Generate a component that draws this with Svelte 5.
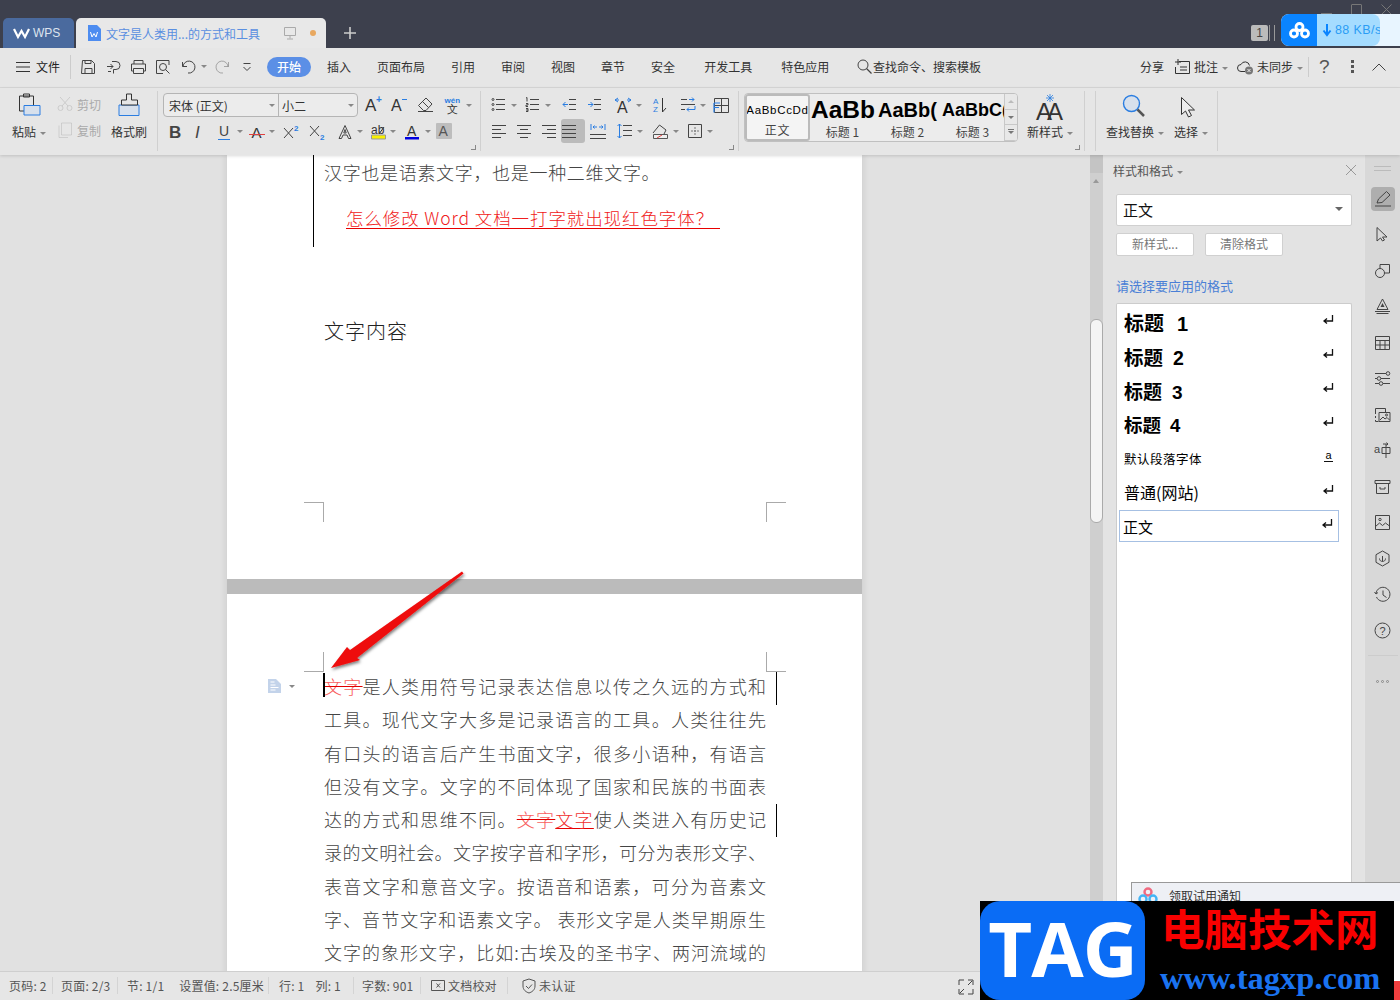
<script>
  const line = 'fill="none" stroke="currentColor" stroke-width="1"';
  const blue = '#2a7de1';
  const icons = {
    save: `<g ${line}><path d="M2.500 1.500h9l3 3v10h-13zM5 14.500v-5h7v5M5 1.500v3h6v-3"/></g>`,
    share: `<g ${line}><path d="M6 2.500h4a4 4 0 0 1 0 8H7.500v4M1 7.500h6M4.500 5l2.500 2.500L4.500 10M2 12.500h3"/></g>`,
    print: `<g ${line}><path d="M4 5V1.500h9V5M3.500 12H1.500V5h14v7h-2M3.500 9.500h10v5h-10z"/></g>`,
    preview: `<g ${line}><path d="M14 6V1.500H1.500v13H8"/><circle cx="8" cy="8" r="3.500"/><path d="M10.500 10.500l4 4"/></g>`,
    undo: `<g ${line}><path d="M1.500 3v4.500H6M2 7.500A6 6 0 1 1 7 14"/></g>`,
    redo: `<g ${line} opacity=".4"><path d="M14.500 3v4.500H10M14 7.500A6 6 0 1 0 9 14"/></g>`,
    more: `<g ${line}><path d="M1.500 1.500h7M1.500 5l3.500 3.500L8.500 5"/></g>`,
    note: `<g ${line}><path d="M5 2.500h10.500v12H1.500V8M6 8h7M6 11h7M4 0v6M1 3h6"/></g>`,
    cloud: `<g ${line}><path d="M8 12.500H4A3.500 3.500 0 0 1 4 5.500a4.500 4.500 0 0 1 8.500 1"/></g><circle cx="12" cy="11.500" r="4" fill="#777"/><path d="M10.500 10l3 3m0-3l-3 3" stroke="#eee"/>`,
    paste: `<path d="M2.500 3h14v15h-14zM6.500 1h6v3h-6z" fill="#e6e6e6" stroke="#333"/><path d="M7 12.500h16v9.500h-16z" fill="#d7e0ec" stroke="${blue}"/>`,
    cut: `<g ${line} opacity=".45"><circle cx="3.500" cy="12" r="2.500"/><circle cx="12.500" cy="12" r="2.500"/><path d="M5 10L13 1M11 10L3 1"/></g>`,
    copy: `<g ${line} opacity=".4"><path d="M4.500 1h10v12h-10zM2 3.500v12h9"/></g>`,
    brush: `<path d="M1 12h20v10.500H1z" fill="#d7e0ec" stroke="${blue}"/><path d="M8.500 1h5v6h6v5h-16V7h5z" fill="#e6e6e6" stroke="#333"/>`,
    aplus: `<text x="0" y="15" font-size="17" fill="#333">A</text><text x="11" y="7" font-size="10" font-weight="700" fill="${blue}">+</text>`,
    aminus: `<text x="0" y="15" font-size="16" fill="#333">A</text><path d="M11 3.500h5" stroke="${blue}"/>`,
    eraser: `<g ${line}><path d="M1.500 9.500l7.500-7.500 6 6-6 6.500H6.500zM5.500 5.500l6 6M1 15.500h15"/></g>`,
    wen: `<text x="0.500" y="6.500" font-size="8" fill="${blue}" font-weight="700">wén</text><text x="3" y="16.500" font-size="11" fill="#333">文</text>`,
    bold: `<text x="1" y="14" font-size="17" font-weight="700" fill="#444">B</text>`,
    italic: `<text x="3" y="14" font-size="17" font-style="italic" fill="#444" font-family="Liberation Serif">I</text>`,
    under: `<text x="2" y="12" font-size="14" fill="#444">U</text><path d="M1 15.500h12" stroke="${blue}"/>`,
    strike: `<text x="2.500" y="14" font-size="15" fill="#333">A</text><path d="M0 10.500h16" stroke="#e04040"/>`,
    sup: `<path d="M1 4l9 10m0-10l-9 10" ${line}/><text x="11" y="7" font-size="8" font-weight="700" fill="${blue}">2</text>`,
    sub: `<path d="M1 2l9 10m0-10l-9 10" ${line}/><text x="11" y="16" font-size="8" font-weight="700" fill="${blue}">2</text>`,
    aout: `<path d="M8 1.500l6 13h-2.500L10 11H6l-1.500 3.500H2z" ${line}/><path d="M8 5.500L6.800 9h2.400z" ${line}/>`,
    high: `<text x="1" y="10" font-size="12" fill="#333">ab</text><path d="M1.500 11h14v4h-14z" fill="#f8f000" stroke="#999"/><path d="M9 10l5-7" stroke="#333"/>`,
    acolor: `<text x="2" y="12" font-size="14" fill="#333">A</text><path d="M0 13h14v2.500H0z" fill="#0000e0"/>`,
    ashade: `<rect x="-2" y="-1" width="16" height="16" fill="#bdbdbd" rx="1"/><text x="0.500" y="12" font-size="14" fill="#555">A</text>`,
    bul: `<g ${line}><path d="M5 2.500h9M5 7.500h9M5 12.500h9"/><circle cx="2" cy="2.500" r="1"/><circle cx="2" cy="7.500" r="1"/><circle cx="2" cy="12.500" r="1"/></g>`,
    num: `<g ${line}><path d="M5 2.500h9M5 7.500h9M5 12.500h9M1 1l1-.5v4M1 6.500h2v1.500H1v1.500h2M1 11.500h2v3H1M1 13h2"/></g>`,
    outd: `<g ${line}><path d="M7 2.500h7M7 7.500h7M7 12.500h7"/></g><path d="M6 7.500H1M3.500 5L1 7.500 3.500 10" fill="none" stroke="${blue}"/>`,
    ind: `<g ${line}><path d="M7 2.500h7M7 7.500h7M7 12.500h7"/></g><path d="M1 7.500h5M3.500 5L6 7.500 3.500 10" fill="none" stroke="${blue}"/>`,
    aarrow: `<text x="3" y="17" font-size="16" fill="#333">A</text><path d="M1 4l3-2M1 4l3 2M1 4h4M13 4h4M17 4l-3-2M17 4l-3 2" fill="none" stroke="${blue}"/>`,
    sort: `<text x="0" y="7" font-size="8" fill="${blue}">A</text><text x="0" y="15" font-size="8" fill="${blue}">Z</text><path d="M9.500 1v14M9.500 15L13 11" fill="none" stroke="#333"/>`,
    swap: `<g ${line}><path d="M1 2.500h6M1 7.500h14M1 12.500h4"/></g><path d="M9 2.500h5M12 .5l2 2-2 2M15 9v3.500H7M9 10.500l-2 2 2 2" fill="none" stroke="${blue}"/>`,
    grid: `<g ${line}><path d="M1.500 1.500h14v14h-14zM8.500 1.500v14M1.500 8.500h14"/></g><path d="M1 6h6M1 6v9.500M1 10.500h5" fill="none" stroke="${blue}" stroke-width="1.200"/>`,
    al: `<g ${line}><path d="M1 2.500h14M1 6.500h9M1 10.500h14M1 14.500h9"/></g>`,
    ac: `<g ${line}><path d="M1 2.500h14M4 6.500h8M1 10.500h14M4 14.500h8"/></g>`,
    ar: `<g ${line}><path d="M1 2.500h14M6 6.500h9M1 10.500h14M6 14.500h9"/></g>`,
    aj: `<g ${line}><path d="M0 2.500h14M0 6.500h14M0 10.500h14M0 14.500h14"/></g>`,
    dist: `<path d="M0 11.500h16M0 15.500h16" ${line}/><path d="M1 1v6M15 1v6M3 4h4M3 4l1.500-1.500M3 4l1.500 1.500M13 4H9M13 4l-1.500-1.500M13 4l-1.500 1.500" fill="none" stroke="${blue}"/>`,
    space: `<path d="M6 2.500h9M6 7.500h9M6 12.500h9" ${line}/><path d="M2.500 1v14M.5 3l2-2 2 2M.5 13l2 2 2-2" fill="none" stroke="${blue}"/>`,
    shade: `<path d="M1 10l6.500-8L14 7l-2 4" ${line}/><path d="M1.500 11.500h14v4h-14z" fill="#eee" stroke="#555"/><path d="M5 15l5-3" stroke="#e04040"/>`,
    border: `<path d="M1.500 1.500h13v13h-13z" ${line}/><path d="M8 4v8M4 8h8" stroke="#777" stroke-dasharray="2 1"/>`,
    newstyle: `<text x="1" y="27" font-size="24" fill="#333" letter-spacing="-5">AA</text><path d="M15 1v8M11 5h8M12 2l6 6M18 2l-6 6" stroke="${blue}" stroke-width=".8"/>`,
    find: `<circle cx="9.500" cy="9.500" r="8" fill="#d7e0ec" stroke="${blue}" stroke-width="1.400"/><path d="M15.500 15.500l6.500 6.500" stroke="#555" stroke-width="2.500"/>`,
    select: `<path d="M1.500 1.500v17l4-3.500 3 6 3-1.500-3-5.500h6z" fill="#eee" stroke="#333"/>`,
    pen: `<path d="M1 16h16M3 13l1.500-4L12.500 1.500l3.500 3.500-8 7.500z" ${line}/>`,
    cursor: `<path d="M3 1.500v13.500l3.500-3 2 3 2-1-2-3h4.500z" ${line}/>`,
    shapes: `<g ${line}><circle cx="6" cy="11" r="4.500"/><path d="M6 6.500V2.500h9.500V11H10.500"/></g>`,
    textfx: `<g ${line}><path d="M8.500 1l5.500 10.500H3zM1 13.500h15M2.500 15.500h12"/></g><path d="M8.500 5L6.500 9h4z" fill="#444"/>`,
    table: `<g ${line}><path d="M1.500 2.500h14v13h-14zM1.500 6.500h14M1.500 11h14M6 6.500v9M11 6.500v9"/></g>`,
    tune: `<g ${line}><path d="M1 3.500h11M1 8.500h2M7 8.500h9M1 13.500h4M9 13.500h7"/><circle cx="14" cy="3.500" r="1.800"/><circle cx="5" cy="8.500" r="1.800"/><circle cx="7" cy="13.500" r="1.800"/></g>`,
    gallery: `<g ${line}><path d="M1.500 8V2.500h10V6M1.500 10v2M1.500 14v1.500h3M5 6.500h11v9H5zM6 14l3-3 2 2 2-1.500 2.500 2.500"/><circle cx="12.500" cy="9" r="1"/></g>`,
    trans: `<text x="0" y="11" font-size="11" fill="#444">a</text><g ${line}><path d="M8 5.500h8v6H8zM12 2v14M9 2h5M12.500 .5l1.500 1.500-1.500 1.500"/></g>`,
    box: `<g ${line}><path d="M1 2.500h15v3H1zM2.500 5.500v10h12v-10M6 9v2h5V9"/></g>`,
    image: `<g ${line}><path d="M1.500 1.500h14v14h-14zM1.500 12.500l4-3.500 3 2.500 3-2.500 4 3"/><circle cx="6" cy="5.500" r="1.200"/></g>`,
    shield: `<g ${line}><path d="M8.500 1l6.500 3.700v7.600L8.500 16 2 12.300V4.700z"/><path d="M5.500 8.500c0 3 3 3 3 3s3 0 3-3M8.500 11.500V6"/></g>`,
    history: `<g ${line}><path d="M2.500 11A7 7 0 1 0 2 7.500M.5 6l1.500 2 2-1.500M9 4.500V9l3.500 2.500"/></g>`,
    help: `<circle cx="8.500" cy="8.500" r="7.500" ${line}/><text x="5.500" y="12.500" font-size="11" fill="#444">?</text>`,
    docside: `<path d="M0 0h8l5 5v9H0z" fill="#c3d3ea"/><path d="M2.500 3h4M2.500 6h5M2.500 8.500h8M2.500 11h5" fill="none" stroke="#fff"/>`,
    proof: `<g ${line}><path d="M11 2.500H1.500v10H11M6 2.500h8.500v10H6"/><path d="M6.500 5.500l3.500 4m0-4l-3.500 4"/></g>`,
    verify: `<g ${line}><path d="M8 1l6 2v5c0 4-3 6-6 7-3-1-6-3-6-7V3zM5 8l2.500 2.500L11 6.500"/></g>`,
    full: `<g ${line}><path d="M1 6V1h5M10 1h5v5M15 10v5h-5M6 15H1v-5M2 14l4-4M14 2l-4 4"/></g>`
  };

  const fontRow1 = [{ n: 'aplus', w: 26, s: 18 }, { n: 'aminus', w: 26, s: 18 }, { n: 'eraser', w: 27, s: 18 }, { n: 'wen', w: 23, s: 18, c: 1 }];
  const fontRow2 = [
    { n: 'bold', w: 24 }, { n: 'italic', w: 25 }, { n: 'under', w: 32, c: 1 }, { n: 'strike', w: 34, c: 1 },
    { n: 'sup', w: 26 }, { n: 'sub', w: 28 }, { n: 'aout', w: 33, c: 1 }, { n: 'high', w: 35, c: 1 },
    { n: 'acolor', w: 33, c: 1 }, { n: 'ashade', w: 16 }
  ];
  const paraRow1 = [
    { n: 'bul', w: 34, c: 1 }, { n: 'num', w: 37, c: 1 }, { n: 'outd', w: 25 }, { n: 'ind', w: 27 },
    { n: 'aarrow', w: 39, s: 18, c: 1 }, { n: 'sort', w: 27 }, { n: 'swap', w: 33, c: 1 }, { n: 'grid', w: 17, s: 17 }
  ];
  const paraRow2 = [
    { n: 'al', w: 25 }, { n: 'ac', w: 25 }, { n: 'ar', w: 21 }, { n: 'aj', w: 28, on: 1 }, { n: 'dist', w: 27, s: 17 },
    { n: 'space', w: 35, c: 1 }, { n: 'shade', w: 35, s: 17, c: 1 }, { n: 'border', w: 30, c: 1 }
  ];
  const quick = [{ n: 'save', w: 26 }, { n: 'share', w: 24 }, { n: 'print', w: 25 }, { n: 'preview', w: 26 }, { n: 'undo', w: 33, c: 1 }, { n: 'redo', w: 28 }, { n: 'more', w: 10, s: 10 }];
  const tabs = ['插入', '页面布局', '引用', '审阅', '视图', '章节', '安全', '开发工具', '特色应用'];
  const gallery = [
    { a: 'AaBbCcDd', l: '正文', cls: 'g0' },
    { a: 'AaBb', l: '标题 1', cls: 'g1' },
    { a: 'AaBb(', l: '标题 2', cls: 'g2' },
    { a: 'AaBbC(', l: '标题 3', cls: 'g3' }
  ];
  const styles = [
    { t: '标题', num: '1', cls: 'h1' }, { t: '标题', num: '2', cls: 'h2' }, { t: '标题', num: '3', cls: 'h3' },
    { t: '标题', num: '4', cls: 'h4' }, { t: '默认段落字体', cls: 'def', a: true }, { t: '普通(网站)', cls: 'web' }, { t: '正文', cls: 'web cur' }
  ];
  const rail = ['cursor', 'shapes', 'textfx', 'table', 'tune', 'gallery', 'trans', 'box', 'image', 'shield', 'history', 'help'];
  const body1 = ['工具。现代文字大多是记录语言的工具。人类往往先', '有口头的语言后产生书面文字，很多小语种，有语言', '但没有文字。文字的不同体现了国家和民族的书面表'];
  const body2 = ['录的文明社会。文字按字音和字形，可分为表形文字、', '表音文字和意音文字。按语音和语素，可分为音素文', '字、音节文字和语素文字。 表形文字是人类早期原生', '文字的象形文字，比如:古埃及的圣书字、两河流域的'];
  const status = [['页码: 2'], ['页面: 2/3'], ['节: 1/1', '设置值: 2.5厘米'], ['行: 1', '列: 1'], ['字数: 901']];
</script>

{#snippet icon(n, s = 16)}
  <svg class="ic" width={s} height={s} viewBox="0 0 {s} {s}">{@html icons[n]}</svg>
{/snippet}

{#snippet tools(list)}
  {#each list as t}
    <span class="slot" class:on={t.on} style="width:{t.w}px">{@render icon(t.n, t.s ?? 16)}{#if t.c}<i class="caret"></i>{/if}</span>
  {/each}
{/snippet}

<div class="app">
  <header class="titlebar">
    <div class="wpstab">
      <svg width="17" height="12" viewBox="0 0 17 12"><path d="M1 2l4 8 3.500-6 3.500 6 4-8" fill="none" stroke="#fff" stroke-width="2.200"/></svg>
      <span>WPS</span>
    </div>
    <div class="doctab">
      <svg width="14" height="16" viewBox="0 0 14 16"><path d="M1 0h9l4 4v12H1z" fill="#4d8cf0"/><path d="M3.500 7l1.500 5 2-3.500 2 3.500 1.500-5" fill="none" stroke="#fff"/></svg>
      <span class="doctitle">文字是人类用...的方式和工具</span>
      <svg class="screen" width="12" height="13" viewBox="0 0 12 13"><path d="M.5.5h11v8H.5zM6 8.500v3M3 12h6" fill="none" stroke="#aaa"/></svg>
      <i class="dot"></i>
    </div>
    <svg class="plus" width="12" height="12" viewBox="0 0 12 12"><path d="M6 0v12M0 6h12" stroke="#ccc" stroke-width="1.600"/></svg>
    <div class="winctl">
      <i class="min"></i><i class="max"></i>
      <svg width="11" height="11" viewBox="0 0 11 11"><path d="M.5.5l10 10m0-10l-10 10" stroke="#777"/></svg>
    </div>
    <div class="badge"><b>1</b><i></i></div>
    <div class="netdisk">
      <div class="netlogo">
        <svg width="21" height="17" viewBox="0 0 21 17"><g fill="none" stroke="#fff" stroke-width="2.800"><circle cx="10.500" cy="5" r="3.500"/><circle cx="5" cy="11.500" r="3.500"/><circle cx="16" cy="11.500" r="3.500"/></g></svg>
      </div>
      <div class="netspeed">
        <svg width="8" height="12" viewBox="0 0 8 12"><path d="M4 0v10M.5 6.500L4 11l3.500-4.500" fill="none" stroke="#0a84ff" stroke-width="2"/></svg>
        <span>88 KB/s</span>
      </div>
    </div>
  </header>

  <nav class="menubar">
    <svg class="burger" width="14" height="10" viewBox="0 0 14 10"><path d="M0 .5h14M0 5h14M0 9.500h14" stroke="#333"/></svg>
    <span class="file">文件</span>
    <i class="vsep"></i>
    <div class="quick">{@render tools(quick)}</div>
    <span class="pill">开始</span>
    <div class="tabs">
      {#each tabs as t}<span>{t}</span>{/each}
    </div>
    <div class="cmd">
      <svg width="15" height="15" viewBox="0 0 15 15"><circle cx="6" cy="6" r="5" fill="none" stroke="#444"/><path d="M9.500 9.500l5 5" stroke="#444" stroke-width="1.300"/></svg>
      <span>查找命令、搜索模板</span>
    </div>
    <div class="menuright">
      <span class="share">分享</span>
      {@render icon('note')}<span class="mr">批注<i class="caret"></i></span>
      {@render icon('cloud')}<span class="mr end">未同步<i class="caret"></i></span>
      <i class="vsep short"></i>
      <span class="q">?</span>
      <svg class="dots" width="3" height="13" viewBox="0 0 3 13"><path d="M0 0h3v3H0zM0 5h3v3H0zM0 10h3v3H0z" fill="#555"/></svg>
      <svg class="up" width="14" height="8" viewBox="0 0 14 8"><path d="M.5 7.500L7 1l6.500 6.500" fill="none" stroke="#444"/></svg>
    </div>
  </nav>

  <section class="ribbon">
    <div class="grp clip">
      <div class="pastecol">
        {@render icon('paste', 24)}
        <span>粘贴<i class="caret"></i></span>
      </div>
      <div class="clipcol">
        <span class="dim">{@render icon('cut')}<em>剪切</em></span>
        <span class="dim">{@render icon('copy')}<em>复制</em></span>
      </div>
      <div class="brushcol">
        {@render icon('brush', 22)}
        <span>格式刷</span>
      </div>
    </div>
    <i class="rsep"></i>
    <div class="grp font">
      <div class="row r1">
        <div class="fontbox"><span class="fname">宋体 (正文)<i class="caret"></i></span><span class="fsize">小二<i class="caret"></i></span></div>
        {@render tools(fontRow1)}
      </div>
      <div class="row r2">{@render tools(fontRow2)}</div>
      <i class="launch"></i>
    </div>
    <i class="rsep"></i>
    <div class="grp para">
      <div class="row">{@render tools(paraRow1)}</div>
      <div class="row p2">{@render tools(paraRow2)}</div>
      <i class="launch"></i>
    </div>
    <i class="rsep"></i>
    <div class="grp stylegrp">
      <div class="gallery">
        {#each gallery as g, i}
          <div class="gitem {g.cls}" class:first={i === 0}>
            <span class="sample">{g.a}</span>
            <span class="glabel">{g.l}</span>
          </div>
        {/each}
        <div class="gscroll"><i class="sup"></i><i class="sdown"></i><i class="sdown bar"></i></div>
      </div>
      <div class="newstyle">
        {@render icon('newstyle', 30)}
        <span>新样式<i class="caret"></i></span>
      </div>
      <i class="launch"></i>
    </div>
    <i class="rsep"></i>
    <i class="rsep second"></i>
    <div class="grp editgrp">
      <div class="bigbtn find">{@render icon('find', 26)}<span>查找替换<i class="caret"></i></span></div>
      <div class="bigbtn sel">{@render icon('select', 22)}<span>选择<i class="caret"></i></span></div>
    </div>
    <i class="rsep"></i>
  </section>

  <main class="workspace">
    <div class="docarea">
      <div class="sheet">
        <article class="page one">
          <i class="revbar"></i>
          <p class="first">汉字也是语素文字，也是一种二维文字。</p>
          <p class="redline">怎么修改 Word 文档一打字就出现红色字体？</p>
          <p class="heading">文字内容</p>
          <i class="crop c1"></i><i class="crop c2"></i>
        </article>
        <article class="page two">
          <i class="crop c3"></i><i class="crop c4"></i>
          <span class="sideicon">{@render icon('docside', 14)}<i class="caret"></i></span>
          <i class="cursor"></i>
          <i class="change l1"></i><i class="change l5"></i>
          <div class="bodytext">
            <p><s>文字</s>是人类用符号记录表达信息以传之久远的方式和</p>
            {#each body1 as l}<p>{l}</p>{/each}
            <p>达的方式和思维不同。<s>文字</s><u>文字</u>使人类进入有历史记</p>
            {#each body2 as l}<p>{l}</p>{/each}
          </div>
        </article>
      </div>
    </div>
    <div class="vscroll">
      <i class="splitter"></i>
      <i class="arrowup"></i>
      <i class="thumb"></i>
    </div>
    <aside class="panel">
      <div class="phead"><span>样式和格式<i class="caret"></i></span>
        <svg width="10" height="10" viewBox="0 0 10 10"><path d="M0 0l10 10m0-10L0 10" stroke="#999"/></svg>
      </div>
      <div class="combo"><span>正文</span><i class="caret big"></i></div>
      <div class="pbtns"><button>新样式...</button><button>清除格式</button></div>
      <div class="hint">请选择要应用的格式</div>
      <ul class="stylelist">
        {#each styles as s}
          <li class={s.cls}>
            <span>{s.t}{#if s.num}<b class="n">{s.num}</b>{/if}</span>
            {#if s.a}
              <em class="amark">a</em>
            {:else}
              <svg class="ret" width="11" height="10" viewBox="0 0 11 10"><path d="M9.500 0v6H2M4 3.500L1 6l3 2.500" fill="none" stroke="#111" stroke-width="1.300"/></svg>
            {/if}
          </li>
        {/each}
      </ul>
    </aside>
    <div class="rail">
      <i class="grip"></i>
      <span class="railbtn active">{@render icon('pen', 18)}</span>
      {#each rail as r}
        <span class="railbtn">{@render icon(r, 17)}</span>
      {/each}
      <i class="railsep"></i>
      <span class="raildots"><i></i><i></i><i></i></span>
    </div>
    <div class="notice">
      <svg width="20" height="18" viewBox="0 0 20 18"><g fill="none" stroke-width="2.400"><circle cx="10" cy="5" r="3.500" stroke="#f06a80"/><circle cx="5" cy="12" r="3.500" stroke="#43b4f5"/><circle cx="15" cy="12" r="3.500" stroke="#43b4f5"/></g></svg>
      <span>领取试用通知</span>
    </div>
  </main>

  <footer class="statusbar">
    {#each status as group, i}
      <div class="sgroup s{i}">{#each group as s}<span>{s}</span>{/each}</div>
    {/each}
    <div class="sgroup withicon">{@render icon('proof')}<span>文档校对</span></div>
    <div class="sgroup withicon last">{@render icon('verify')}<span>未认证</span></div>
    <span class="fullbtn">{@render icon('full')}</span>
  </footer>

  <svg class="arrow" width="150" height="110" viewBox="0 0 150 110">
    <defs><filter id="sh" x="-20%" y="-20%" width="150%" height="150%"><feDropShadow dx="1" dy="2" stdDeviation="1.500" flood-color="#000" flood-opacity=".5"/></filter></defs>
    <path d="M133 1.500L134.500 3.500 28 88l3 2L2 98 18 77l3 3z" fill="#ee0a0a" filter="url(#sh)"/>
  </svg>

  <div class="watermark">
    <div class="tag">TAG</div>
    <div class="wmtext">
      <span class="cn">电脑技术网</span>
      <span class="url">www.tagxp.com</span>
    </div>
  </div>
  <div class="wmedge"></div>
</div>

<style>
  :global(body) {
    margin: 0;
  }

  .app {
    position: relative;
    width: 1400px;
    height: 1000px;
    overflow: hidden;
    display: flex;
    flex-direction: column;
    background: #e1e1e1;
    color: #333;
    font-family: "Noto Sans CJK SC", "Liberation Sans", sans-serif;
    font-size: 12px;
  }

  i, em {
    font-style: normal;
  }

  svg {
    display: block;
    flex: none;
    overflow: visible;
  }

  svg :global(text) {
    font-family: "Liberation Sans", sans-serif;
  }

  .caret {
    display: inline-block;
    width: 0;
    height: 0;
    border: 3px solid transparent;
    border-top: 3px solid #888;
    border-bottom: 0;
    margin-left: 4px;
    vertical-align: middle;
    flex: none;
  }

  .titlebar {
    height: 48px;
    background: #3d404d;
    position: relative;
    display: flex;
    align-items: flex-end;
    padding-left: 3px;
    flex: none;
  }

  .wpstab {
    width: 71px;
    height: 30px;
    background: #4a6a9e;
    border-radius: 5px 5px 0 0;
    display: flex;
    align-items: center;
    gap: 3px;
    padding-left: 10px;
    box-sizing: border-box;
    color: #dde4ef;
    font-family: "Liberation Sans", sans-serif;
    font-size: 12px;
  }

  .doctab {
    width: 250px;
    height: 30px;
    margin-left: 2px;
    background: #e8e8e8;
    border-radius: 5px 5px 0 0;
    display: flex;
    align-items: center;
    padding-left: 11px;
    box-sizing: border-box;
  }

  .doctitle {
    margin-left: 5px;
    width: 178px;
    color: #5a8fe0;
    white-space: nowrap;
  }

  .dot {
    width: 6px;
    height: 6px;
    border-radius: 50%;
    background: #e8a860;
    margin-left: 14px;
  }

  .plus {
    margin: 0 0 9px 18px;
  }

  .winctl {
    position: absolute;
    top: 4px;
    right: 8px;
    display: flex;
    align-items: center;
    gap: 19px;
  }

  .min {
    width: 11px;
    height: 1px;
    background: #777;
    margin-top: 7px;
  }

  .max {
    width: 9px;
    height: 9px;
    border: 1px solid #777;
    border-radius: 1px;
  }

  .badge {
    position: absolute;
    left: 1251px;
    top: 25px;
    display: flex;
    align-items: center;
  }

  .badge b {
    width: 17px;
    height: 16px;
    background: #bbb;
    color: #444;
    border-radius: 2px;
    font: 400 12px/16px "Liberation Sans", sans-serif;
    text-align: center;
  }

  .badge i {
    width: 4px;
    height: 16px;
    border-left: 1px solid #999;
    border-right: 1px solid #999;
    margin-left: 1px;
  }

  .netdisk {
    position: absolute;
    left: 1281px;
    top: 14px;
    width: 119px;
    height: 32px;
    display: flex;
    background: #e8f5ff;
    border-radius: 8px 0 0 8px;
    overflow: hidden;
  }

  .netlogo {
    width: 36px;
    background: #0a84ff;
    display: flex;
    align-items: center;
    justify-content: center;
  }

  .netspeed {
    width: 63px;
    background: #a5dcff;
    border-radius: 0 8px 8px 0;
    display: flex;
    align-items: center;
    gap: 4px;
    padding-left: 6px;
    box-sizing: border-box;
    color: #2a9cf5;
    font-family: "Liberation Sans", sans-serif;
    font-size: 12.500px;
    letter-spacing: 0.400px;
    white-space: nowrap;
    overflow: hidden;
  }

  .menubar {
    flex: none;
    display: flex;
    align-items: center;
    background: #e6e6e6;
    border-bottom: 1px solid #d8d8d8;
    padding: 0 0 2px 16px;
    box-sizing: border-box;
    height: 40px;
    position: relative;
    z-index: 2;
  }

  .file {
    margin-left: 6px;
    color: #222;
  }

  .vsep {
    width: 1px;
    height: 24px;
    background: #ccc;
    margin: 0 9px 0 10px;
  }

  .quick {
    display: flex;
    align-items: center;
    width: 187px;
    color: #444;
  }

  .slot {
    display: flex;
    align-items: center;
    flex: none;
    height: 20px;
    color: #444;
    position: relative;
  }

  .slot.on::before {
    content: "";
    position: absolute;
    left: -1px;
    top: -2px;
    width: 24px;
    height: 24px;
    border-radius: 3px;
    background: #bbb;
  }

  .slot .ic {
    position: relative;
  }

  .pill {
    width: 44px;
    height: 20px;
    border-radius: 10px;
    background: #5b8fe6;
    color: #fff;
    text-align: center;
    line-height: 20px;
    font-weight: 500;
  }

  .tabs {
    display: flex;
    gap: 26px;
    margin-left: 16px;
    width: 502px;
    white-space: nowrap;
  }

  .tabs span:nth-child(8), .tabs span:nth-child(9) {
    margin-left: 3px;
  }

  .cmd {
    display: flex;
    align-items: center;
    gap: 1px;
    margin-left: 28px;
    white-space: nowrap;
  }

  .menuright {
    margin-left: auto;
    display: flex;
    align-items: center;
    padding-right: 14px;
  }

  .share {
    margin-right: 10px;
  }

  .mr {
    margin: 0 9px 0 4px;
    white-space: nowrap;
  }

  .mr.end {
    margin-right: 5px;
  }

  .vsep.short {
    height: 20px;
    margin: 0 10px 0 0;
  }

  .q {
    font: 400 19px/20px "Liberation Sans", sans-serif;
    color: #555;
    width: 14px;
  }

  .dots {
    margin-left: 18px;
  }

  .up {
    margin-left: 18px;
  }

  .ribbon {
    height: 67px;
    flex: none;
    background: #e6e6e6;
    display: flex;
    align-items: stretch;
    position: relative;
    z-index: 2;
    box-shadow: 0 1px 3px rgba(0, 0, 0, 0.15);
  }

  .rsep {
    width: 1px;
    background: #d0d0d0;
    margin: 3px 0 4px;
    flex: none;
  }

  .grp {
    position: relative;
    flex: none;
    box-sizing: border-box;
  }

  .launch {
    position: absolute;
    right: 4px;
    bottom: 5px;
    width: 4px;
    height: 4px;
    border-right: 1px solid #888;
    border-bottom: 1px solid #888;
  }

  .clip {
    width: 157px;
    display: flex;
    padding: 5px 0 0 12px;
  }

  .pastecol {
    width: 45px;
  }

  .pastecol span, .brushcol span {
    display: block;
    margin-top: 6px;
    white-space: nowrap;
  }

  .pastecol .ic {
    margin: 0 0 0 5px;
  }

  .clipcol {
    display: flex;
    flex-direction: column;
    gap: 10px;
    padding-top: 3px;
    width: 54px;
  }

  .dim {
    display: flex;
    align-items: center;
    gap: 4px;
    color: #aaa;
    height: 16px;
  }

  .brushcol .ic {
    margin: 0 0 0 7px;
  }

  .brushcol span {
    margin-top: 8px;
  }

  .font {
    width: 322px;
    padding: 5px 0 0 5px;
  }

  .row {
    display: flex;
    align-items: center;
    height: 24px;
  }

  .font .r2 {
    margin-top: 3px;
    padding-left: 5px;
    height: 23px;
  }

  .fontbox {
    width: 195px;
    height: 24px;
    box-sizing: border-box;
    border: 1px solid #b5b5b5;
    border-radius: 4px;
    background: #ececec;
    display: flex;
    margin-right: 7px;
  }

  .fname, .fsize {
    display: flex;
    align-items: center;
    justify-content: space-between;
    padding: 0 3px 0 5px;
    box-sizing: border-box;
  }

  .fname {
    width: 115px;
    border-right: 1px solid #b5b5b5;
  }

  .fsize {
    flex: 1;
    padding-left: 3px;
  }

  .para {
    width: 257px;
    padding: 5px 0 0 10px;
  }

  .p2 {
    margin-top: 2px;
  }

  .stylegrp {
    width: 345px;
    padding: 5px 0 0 5px;
    display: flex;
  }

  .gallery {
    width: 274px;
    height: 49px;
    box-sizing: border-box;
    border: 1px solid #c0c0c0;
    border-radius: 4px;
    background: #ececec;
    display: flex;
    overflow: hidden;
    position: relative;
  }

  .gitem {
    width: 65px;
    flex: none;
    display: flex;
    flex-direction: column;
    align-items: center;
    overflow: hidden;
    font-family: "Liberation Sans", sans-serif;
    box-sizing: border-box;
  }

  .gitem.first {
    border: 2px solid #bbb;
    border-radius: 3px;
    background: #f4f4f4;
    height: 47px;
  }

  .sample {
    height: 30px;
    line-height: 32px;
    color: #000;
    white-space: nowrap;
    font-weight: 700;
  }

  .g0 .sample {
    font-size: 11.500px;
    font-weight: 400;
    height: 26px;
    line-height: 28px;
  }

  .g1 .sample {
    font-size: 24.500px;
    padding-left: 1px;
  }

  .g2 .sample {
    font-size: 20px;
    align-self: flex-start;
    margin-left: 3px;
  }

  .g3 .sample {
    font-size: 18px;
    align-self: flex-start;
    margin-left: 2px;
  }

  .glabel {
    font-family: "Noto Sans CJK SC", sans-serif;
    font-size: 12px;
    line-height: 16px;
    color: #444;
    white-space: nowrap;
  }

  .gscroll {
    position: absolute;
    right: 0;
    top: 0;
    width: 12px;
    height: 47px;
    display: flex;
    flex-direction: column;
    border-left: 1px solid #c8c8c8;
    background: #e8e8e8;
  }

  .gscroll i {
    flex: 1;
    border-bottom: 1px solid #c8c8c8;
    position: relative;
  }

  .gscroll i::after {
    content: "";
    position: absolute;
    left: 3px;
    top: 6px;
    border: 3px solid transparent;
    border-top: 3px solid #777;
    border-bottom: 0;
  }

  .gscroll .sup::after {
    border-top: 0;
    border-bottom: 3px solid #bbb;
  }

  .gscroll .bar::before {
    content: "";
    position: absolute;
    left: 3px;
    top: 4px;
    width: 6px;
    height: 1px;
    background: #777;
  }

  .newstyle {
    margin-left: 8px;
    width: 48px;
    text-align: center;
  }

  .newstyle .ic {
    margin: 0 auto;
  }

  .newstyle span {
    display: block;
    white-space: nowrap;
  }

  .second {
    margin-left: 10px;
  }

  .editgrp {
    width: 121px;
    display: flex;
    padding: 6px 0 0 10px;
  }

  .bigbtn {
    display: flex;
    flex-direction: column;
    align-items: center;
    white-space: nowrap;
  }

  .bigbtn span {
    margin-top: 3px;
  }

  .bigbtn .ic {
    height: 26px;
  }

  .sel {
    margin-left: 10px;
  }

  .workspace {
    flex: 1;
    min-height: 0;
    display: flex;
    position: relative;
  }

  .docarea {
    width: 1090px;
    overflow: hidden;
    background: #e1e1e1;
  }

  .sheet {
    width: 635px;
    margin-left: 227px;
    background: #bbb;
    box-shadow: -3px 0 5px rgba(0, 0, 0, 0.06), 3px 0 5px rgba(0, 0, 0, 0.06);
  }

  .page {
    position: relative;
    background: #fff;
    box-sizing: border-box;
    font-size: 18px;
    font-weight: 300;
    color: #444;
  }

  .page p {
    margin: 0;
    white-space: nowrap;
  }

  .one {
    height: 424px;
    padding: 3px 0 0 97px;
    margin-bottom: 15px;
  }

  .revbar {
    position: absolute;
    left: 86px;
    top: 0;
    width: 1px;
    height: 92px;
    background: #000;
  }

  .first {
    line-height: 28px;
    letter-spacing: 0.680px;
  }

  .redline {
    margin: 22px 0 0 22px !important;
    width: fit-content;
    color: #f02020;
    line-height: 20px;
    font-size: 17.500px;
    letter-spacing: 0.900px;
    border-bottom: 1px solid #e80000;
    padding-right: 6px;
  }

  .heading {
    margin-top: 88px !important;
    font-size: 20px;
    letter-spacing: 1px;
    line-height: 28px;
    color: #222;
  }

  .crop {
    position: absolute;
    width: 19px;
    height: 19px;
    border: 0 solid #aaa;
  }

  .c1 {
    left: 77px;
    top: 347px;
    border-top-width: 1px;
    border-right-width: 1px;
  }

  .c2 {
    left: 539px;
    top: 347px;
    border-top-width: 1px;
    border-left-width: 1px;
  }

  .c3 {
    left: 77px;
    top: 58px;
    border-bottom-width: 1px;
    border-right-width: 1px;
  }

  .c4 {
    left: 539px;
    top: 58px;
    border-bottom-width: 1px;
    border-left-width: 1px;
  }

  .two {
    height: 500px;
    padding: 76px 0 0 97px;
  }

  .bodytext {
    width: 442px;
  }

  .bodytext p {
    height: 33.300px;
    line-height: 33.300px;
    white-space: normal;
    text-align: justify;
    text-align-last: justify;
    overflow: hidden;
  }

  .bodytext s {
    color: #f86060;
    text-decoration-color: #e00000;
  }

  .bodytext u {
    color: #f03030;
    text-decoration-color: #e80000;
  }

  .sideicon {
    position: absolute;
    left: 41px;
    top: 85px;
    display: flex;
    align-items: center;
    gap: 3px;
  }

  .cursor {
    position: absolute;
    left: 96px;
    top: 79px;
    width: 2px;
    height: 24px;
    background: #000;
  }

  .change {
    position: absolute;
    left: 549px;
    width: 1px;
    height: 33px;
    background: #000;
  }

  .l1 {
    top: 78px;
  }

  .l5 {
    top: 210px;
  }

  .vscroll {
    width: 13px;
    background: #cfcfcf;
    position: relative;
  }

  .splitter {
    display: block;
    height: 18px;
    background: #c4c4c4;
  }

  .arrowup {
    position: absolute;
    left: 3px;
    top: 24px;
    border: 3px solid transparent;
    border-bottom: 4px solid #999;
    border-top: 0;
  }

  .thumb {
    position: absolute;
    left: 0;
    top: 164px;
    width: 13px;
    height: 204px;
    background: #f4f4f4;
    border: 1px solid #aaa;
    border-radius: 6px;
    box-sizing: border-box;
  }

  .panel {
    width: 261px;
    background: #e3e3e3;
    box-sizing: border-box;
    padding: 0 12px 0 13px;
    display: flex;
    flex-direction: column;
  }

  .phead {
    height: 30px;
    display: flex;
    align-items: center;
    justify-content: space-between;
    color: #555;
    padding-left: 10px;
    margin: 0 -5px 0 -13px;
    padding-right: 1px;
  }

  .combo {
    height: 32px;
    margin-top: 9px;
    box-sizing: border-box;
    background: #fff;
    border: 1px solid #d0d0d0;
    border-radius: 2px;
    display: flex;
    align-items: center;
    justify-content: space-between;
    padding: 0 8px 2px 6px;
    font-size: 15px;
    color: #111;
  }

  .caret.big {
    border-width: 4px;
    border-top-color: #666;
    border-bottom: 0;
  }

  .pbtns {
    display: flex;
    gap: 11px;
    margin-top: 7px;
  }

  .pbtns button {
    width: 78px;
    height: 23px;
    padding: 0 0 2px;
    background: #fff;
    border: 1px solid #d0d0d0;
    border-radius: 2px;
    color: #777;
    font: inherit;
  }

  .hint {
    margin-top: 21px;
    color: #4a7fd6;
    font-size: 13px;
    line-height: 18px;
  }

  .stylelist {
    list-style: none;
    margin: 8px 0 0;
    padding: 1px 0 0 2px;
    flex: 1;
    background: #fff;
    border: 1px solid #ccc;
    border-bottom: 0;
    border-radius: 2px 2px 0 0;
  }

  .stylelist li {
    display: flex;
    align-items: center;
    justify-content: space-between;
    height: 34px;
    box-sizing: border-box;
    padding: 0 5px 0 5px;
    width: 220px;
    color: #000;
    white-space: nowrap;
  }

  .ret, .amark {
    transform: translateY(-2px);
  }

  .h1 {
    font-size: 20px;
    font-weight: 700;
  }

  .h2 {
    font-size: 19.500px;
    font-weight: 700;
  }

  .h3 {
    font-size: 19px;
    font-weight: 700;
  }

  .h4 {
    font-size: 18.500px;
    font-weight: 700;
  }

  .h1 .n {
    margin-left: 13px;
  }

  .h2 .n, .h3 .n {
    margin-left: 10px;
  }

  .h4 .n {
    margin-left: 9px;
  }

  .n {
    font-family: "Liberation Sans", sans-serif;
  }

  .def {
    font-size: 12.500px;
    letter-spacing: 0.500px;
  }

  .web {
    font-size: 16px;
  }

  .stylelist .cur {
    border: 1px solid #a6c0e3;
    margin-top: 1px;
    padding-left: 3px;
    font-size: 15px;
    height: 32px;
  }

  .amark {
    font: 400 11px/11px "Liberation Sans", sans-serif;
    border-bottom: 1px solid #111;
    padding: 0 1px;
    margin-right: 1px;
  }

  .rail {
    width: 36px;
    background: #d8d8d8;
    border-left: 1px solid #e4e4e4;
    box-sizing: border-box;
    display: flex;
    flex-direction: column;
    align-items: center;
    color: #444;
  }

  .grip {
    width: 17px;
    height: 3px;
    border-top: 1px solid #bbb;
    border-bottom: 1px solid #bbb;
    margin: 11px 0 16px;
    flex: none;
  }

  .railbtn {
    width: 24px;
    height: 36px;
    display: flex;
    align-items: center;
    justify-content: center;
    flex: none;
  }

  .railbtn.active {
    height: 24px;
    background: #aeaeae;
    border-radius: 4px;
    margin-bottom: 5px;
  }

  .railsep {
    width: 30px;
    height: 1px;
    background: #ccc;
    margin: 7px 0 0;
  }

  .raildots {
    display: flex;
    gap: 2px;
    margin-top: 24px;
  }

  .raildots i {
    width: 3px;
    height: 3px;
    box-sizing: border-box;
    border: 1px solid #888;
    border-radius: 50%;
  }

  .notice {
    position: absolute;
    left: 1131px;
    top: 727px;
    width: 269px;
    height: 19px;
    overflow: hidden;
    box-sizing: border-box;
    background: #eef0f5;
    border-top: 1px solid #999;
    border-left: 1px solid #999;
    display: flex;
    align-items: flex-start;
    padding: 4px 0 0 6px;
    gap: 11px;
    color: #333;
    font-size: 12px;
  }

  .statusbar {
    height: 29px;
    flex: none;
    display: flex;
    align-items: center;
    background: #e6e6e6;
    border-top: 1px solid #cfcfcf;
    box-sizing: border-box;
    color: #555;
    padding-bottom: 1px;
    position: relative;
    letter-spacing: 0.200px;
  }

  .sgroup {
    display: flex;
    align-items: center;
    height: 17px;
    border-right: 1px solid #d4d4d4;
    white-space: nowrap;
  }

  .s0 {
    width: 53px;
    padding-left: 9px;
    box-sizing: border-box;
  }

  .s1 {
    width: 65px;
    padding-left: 8px;
    box-sizing: border-box;
  }

  .s2 {
    width: 151px;
    padding-left: 9px;
    gap: 15px;
    box-sizing: border-box;
  }

  .s3 {
    width: 85px;
    padding-left: 10px;
    gap: 11px;
    box-sizing: border-box;
  }

  .s4 {
    width: 67px;
    padding-left: 8px;
    box-sizing: border-box;
  }

  .withicon {
    gap: 2px;
    width: 87px;
    padding-left: 9px;
    box-sizing: border-box;
  }

  .last {
    border-right: 0;
    padding-left: 13px;
    width: 90px;
  }

  .fullbtn {
    position: absolute;
    left: 958px;
    top: 7px;
    color: #444;
  }

  .arrow {
    position: absolute;
    left: 329px;
    top: 570px;
    z-index: 3;
  }

  .watermark {
    position: absolute;
    left: 980px;
    top: 901px;
    width: 414px;
    height: 99px;
    background: #000;
    display: flex;
    z-index: 4;
  }

  .tag {
    width: 165px;
    height: 99px;
    background: #0a6cf5;
    border-radius: 20px;
    color: #fff;
    font: 700 76px/93px "Open Sans", "Liberation Sans", sans-serif;
    text-align: center;
    letter-spacing: -1px;
  }

  .wmtext {
    display: flex;
    flex-direction: column;
    padding-left: 16px;
  }

  .cn {
    font-size: 43.500px;
    line-height: 48px;
    font-weight: 700;
    color: #f80000;
    margin-top: 3px;
    white-space: nowrap;
  }

  .url {
    font: 700 32.500px/34px "Liberation Serif", serif;
    color: #1a73f0;
    margin: 9px 0 0 -1px;
    white-space: nowrap;
  }

  .wmedge {
    position: absolute;
    left: 1394px;
    top: 901px;
    width: 6px;
    height: 99px;
    box-sizing: border-box;
    background: #fff;
    border-bottom: 19px solid #f04040;
    z-index: 4;
  }
</style>
